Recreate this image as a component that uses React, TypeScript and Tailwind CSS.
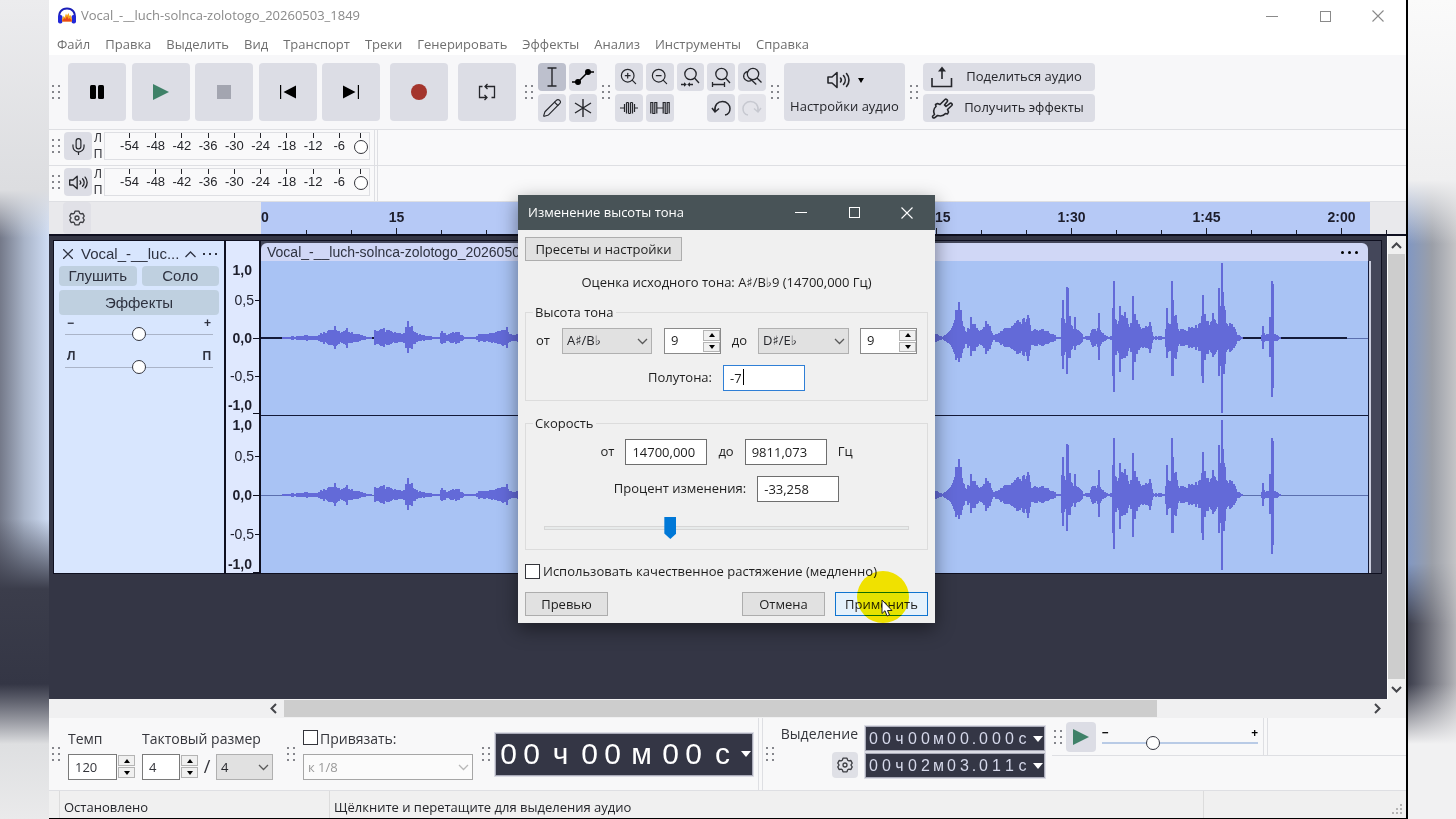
import type { ReactNode } from "react";
import { Mic, Pencil, ZoomIn, ZoomOut } from "lucide-react";
import { clsx } from "clsx";

const MENU = [
  "Файл",
  "Правка",
  "Выделить",
  "Вид",
  "Транспорт",
  "Треки",
  "Генерировать",
  "Эффекты",
  "Анализ",
  "Инструменты",
  "Справка",
];

const METER_MARKS = ["-54", "-48", "-42", "-36", "-30", "-24", "-18", "-12", "-6", "0"];

// 9px per second, one mark every 15 seconds; the marks under the dialog carry no label
const RULER = ["15", "", "", "", "1:15", "1:30", "1:45", "2:00"];

// [x, amplitude] keypoints of the envelope
const ENVELOPE: [number, number][] = [
  [0, 0], [18, 0], [22, 1], [44, 3], [53, 3], [56, 2], [60, 6], [68, 9], [76, 9], [79, 6], [84, 8], [93, 5],
  [103, 2], [112, 0], [113, 8], [123, 10], [133, 6], [139, 5], [143, 8], [146, 17], [150, 13], [154, 5],
  [163, 3], [174, 1], [178, 1], [179, 7], [186, 5], [196, 7], [203, 1], [214, 1], [216, 4], [228, 5],
  [238, 8], [244, 11], [248, 5], [254, 3], [258, 6], [290, 10], [340, 7], [380, 14], [420, 6], [480, 16],
  [540, 9], [600, 14], [655, 8], [673, 5], [681, 1], [685, 5], [690, 12], [694, 24], [697, 28], [701, 14],
  [704, 7], [708, 15], [714, 14], [718, 7], [724, 16], [728, 13], [731, 3], [736, 5], [742, 10], [750, 14],
  [756, 19], [762, 20], [767, 24], [769, 11], [776, 10], [783, 9], [793, 3], [795, 1], [799, 1], [800, 20],
  [804, 18], [808, 27], [811, 11], [818, 8], [821, 2], [828, 2], [830, 11], [837, 10], [842, 4], [846, 1],
  [850, 3], [851, 26], [856, 15], [860, 28], [864, 22], [868, 14], [874, 20], [878, 14], [884, 12],
  [889, 14], [891, 2], [898, 2], [903, 1], [905, 22], [909, 12], [913, 28], [917, 10], [923, 9], [928, 13],
  [936, 14], [942, 20], [948, 18], [952, 22], [956, 14], [958, 32], [963, 32], [965, 16], [970, 17],
  [975, 5], [979, 1], [983, 0], [999, 0], [1001, 7], [1003, 3], [1008, 5], [1014, 5], [1017, 1], [1020, 0],
];

// [x, height above the axis, height below it]
const SPIKES: [number, number, number][] = [
  [73, 12, 11], [85, 10, 10], [146, 17, 15], [245, 11, 10], [694, 28, 22], [695, 28, 20], [697, 36, 24], [699, 28, 20],
  [709, 21, 18], [724, 17, 16], [766, 20, 23], [801, 38, 31], [805, 51, 36], [806, 50, 20], [813, 21, 12],
  [837, 25, 22], [851, 30, 38], [852, 57, 54], [858, 32, 34], [863, 26, 20], [871, 42, 42], [873, 24, 24],
  [888, 16, 15], [905, 30, 20], [910, 57, 38], [911, 38, 38], [940, 22, 38], [941, 43, 45], [943, 24, 22],
  [951, 25, 19], [957, 50, 38], [959, 32, 28], [960, 75, 75], [961, 46, 32], [962, 32, 36], [1001, 12, 11],
  [1008, 21, 19], [1010, 57, 59], [1011, 54, 50],
];

function buildWave(axis: number) {
  let d = "";
  for (let i = 0; i < ENVELOPE.length - 1; i++) {
    const [x0, a0] = ENVELOPE[i];
    const [x1, a1] = ENVELOPE[i + 1];
    for (let x = x0; x < x1; x++) {
      const amp = a0 + ((a1 - a0) * (x - x0)) / (x1 - x0);
      if (amp < 0.3) continue;
      const noise = Math.abs(Math.sin(x * 12.9898) * 43758.5453) % 1;
      const up = amp * (0.6 + 0.4 * noise);
      const down = amp * (0.55 + 0.35 * noise);
      d += `M${x} ${(axis - up).toFixed(1)}V${(axis + down).toFixed(1)}`;
    }
  }
  for (const [x, up, down] of SPIKES) d += `M${x} ${axis - up}V${axis + down}`;
  return d;
}

const WAVE = buildWave(77) + buildWave(234);

function Grip() {
  return (
    <div className="grid w-2 shrink-0 grid-cols-2 gap-1" aria-hidden="true">
      {[0, 1, 2, 3, 4, 5].map((i) => (
        <span key={i} className="size-[2px] bg-[#85868c]" />
      ))}
    </div>
  );
}

function ToolButton({ label, className, children }: { label: string; className?: string; children: ReactNode }) {
  return (
    <button
      type="button"
      aria-label={label}
      className={clsx("flex shrink-0 items-center justify-center rounded-sm text-[#25262b]", className ?? "bg-[#dcdde5]")}
    >
      {children}
    </button>
  );
}

function Gear() {
  return (
    <svg viewBox="0 0 16 16" className="size-4" fill="none" stroke="#3c3d42" strokeWidth="1.3" strokeLinejoin="round">
      <path d="M6 1.2h4l.7 2 1.2.7 2-.4 1.3 2.6L13.9 8l1.3 1.9-1.3 2.6-2-.4-1.2.7-.7 2H6l-.7-2-1.2-.7-2 .4L.8 9.9 2.1 8 .8 6.1 2.1 3.5l2 .4 1.2-.7z" />
      <circle cx="8" cy="8" r="2" />
    </svg>
  );
}

function Speaker({ className }: { className: string }) {
  return (
    <svg viewBox="0 0 24 20" className={className} fill="none" stroke="currentColor" strokeWidth="1.6" strokeLinecap="round" strokeLinejoin="round">
      <path d="M2 7v6h4l5 4.5v-15L6 7z" />
      <path d="M14.5 8c1 1.2 1 2.8 0 4M17.5 5.5c2.3 2.6 2.3 6.4 0 9M20.5 3.5c3.3 3.8 3.3 9.2 0 13" />
    </svg>
  );
}

function Chevron({ className, d = "M1 1l4.5 4.5L10 1" }: { className?: string; d?: string }) {
  return (
    <svg viewBox="0 0 11 7" className={clsx("h-[7px] w-[11px] shrink-0", className)} fill="none" stroke="currentColor" strokeWidth="1.3">
      <path d={d} />
    </svg>
  );
}

function WindowButtons({ className }: { className: string }) {
  return (
    <div className={className}>
      <button type="button" aria-label="Свернуть" className="flex h-4 w-3 items-center">
        <span className="h-px w-3 bg-current" />
      </button>
      <button type="button" aria-label="Развернуть" className="size-[11px] border border-current" />
      <button type="button" aria-label="Закрыть">
        <svg viewBox="0 0 12 12" className="size-3" stroke="currentColor" strokeWidth="1.1">
          <path d="M.5.5l11 11M11.5.5l-11 11" />
        </svg>
      </button>
    </div>
  );
}

function TitleBar() {
  return (
    <header className="flex h-8 items-center gap-1 bg-white pl-2 text-[#8a8a8a]">
      <svg viewBox="0 0 20 18" className="h-[18px] w-5">
        <path d="M2.5 12C1 5 5 1.5 10 1.5S19 5 17.5 12" fill="none" stroke="#1b1fb8" strokeWidth="2" />
        <rect x="1" y="8" width="4.5" height="8.5" rx="2" fill="#2228d8" />
        <rect x="14.5" y="8" width="4.5" height="8.5" rx="2" fill="#2228d8" />
        <path d="M5 12l1.5-3 1 1.5 1.5-4 1 2 1.5-2.5 1 3 1-1 1.5 4v2.5H5z" fill="#f8a51c" />
        <path d="M5.5 13l2-2 1 1 1.5-3 1.5 3 1-1 2 2v1.5h-9z" fill="#e8471c" />
      </svg>
      <h1 className="flex-1 text-[13px]">Vocal_-__luch-solnca-zolotogo_20260503_1849</h1>
      <WindowButtons className="flex w-[140px] items-center justify-between pr-[22px]" />
    </header>
  );
}

function Transport() {
  return (
    <>
      <div className="flex w-[312px] shrink-0 justify-between">
        <ToolButton label="Пауза" className="size-[58px] bg-[#dcdde5]">
          <svg viewBox="0 0 14 14" className="size-[14px]">
            <rect width="6" height="14" rx="1.5" />
            <rect x="8" width="6" height="14" rx="1.5" />
          </svg>
        </ToolButton>
        <ToolButton label="Воспроизвести" className="size-[58px] bg-[#dcdde5]">
          <svg viewBox="0 0 16 16" className="size-4" fill="#3f8168">
            <path d="M0 0l16 8-16 8z" />
          </svg>
        </ToolButton>
        <ToolButton label="Стоп" className="size-[58px] bg-[#dcdde5]">
          <span className="size-[14px] bg-[#a3a5b0]" />
        </ToolButton>
        <ToolButton label="К началу" className="size-[58px] bg-[#dcdde5]">
          <svg viewBox="0 0 16 14" className="h-[14px] w-4" fill="#000">
            <path d="M0 0h1.2v14H0zM16 .5v13L3.5 7z" />
          </svg>
        </ToolButton>
        <ToolButton label="К концу" className="size-[58px] bg-[#dcdde5]">
          <svg viewBox="0 0 16 14" className="h-[14px] w-4" fill="#000">
            <path d="M14.8 0H16v14h-1.2zM0 .5v13L12.5 7z" />
          </svg>
        </ToolButton>
      </div>
      <ToolButton label="Запись" className="ml-[10px] size-[58px] bg-[#dcdde5]">
        <span className="size-4 rounded-full bg-[#a4352d]" />
      </ToolButton>
      <ToolButton label="Петля" className="ml-[10px] size-[58px] bg-[#dcdde5]">
        <svg viewBox="0 0 18 18" className="size-[18px]" fill="none" stroke="currentColor" strokeWidth="1.3">
          <path d="M4.5 3.5h-3v11h7M13.5 14.5h3v-11h-9M9.5 1L7 3.5 9.5 6M6.500 12L9 14.5 6.500 17" />
        </svg>
      </ToolButton>
    </>
  );
}

function Toolbars() {
  return (
    <div className="flex h-[75px] items-center border-b border-[#dedfe3] bg-[#f7f7f9] pl-[3px]">
      <Grip />
      <div className="w-2 shrink-0" />
      <Transport />
      <div className="flex w-[22px] shrink-0 justify-center pl-1">
        <Grip />
      </div>
      <div className="grid shrink-0 grid-cols-2 gap-[3px]">
        <ToolButton label="Выделение" className="size-7 bg-[#bdc0cd]">
          <svg viewBox="0 0 12 20" className="h-5 w-3" fill="none" stroke="currentColor" strokeWidth="1.4">
            <path d="M1.5 1h9M1.5 19h9M6 1v18" />
          </svg>
        </ToolButton>
        <ToolButton label="Огибающая" className="size-7 bg-[#dcdde5]">
          <svg viewBox="0 0 24 20" className="h-5 w-6" stroke="#000" strokeWidth="1.4">
            <path d="M1 15h6L17 5h6" fill="none" />
            <circle cx="7" cy="15" r="2.3" />
            <circle cx="17" cy="5" r="2.3" />
          </svg>
        </ToolButton>
        <ToolButton label="Карандаш" className="size-7 bg-[#dcdde5]">
          <Pencil size={20} strokeWidth={1.4} />
        </ToolButton>
        <ToolButton label="Мульти-инструмент" className="size-7 bg-[#dcdde5]">
          <svg viewBox="0 0 18 18" className="size-[18px]" stroke="currentColor" strokeWidth="1.4">
            <path d="M9 0v18M1 4l16 10M17 4L1 14" />
          </svg>
        </ToolButton>
      </div>
      <div className="flex w-[18px] shrink-0 justify-center">
        <Grip />
      </div>
      <div className="grid w-[151px] shrink-0 grid-cols-5 gap-[3px]">
        <ToolButton label="Приблизить" className="h-7 bg-[#dcdde5]">
          <ZoomIn size={19} strokeWidth={1.5} />
        </ToolButton>
        <ToolButton label="Отдалить" className="h-7 bg-[#dcdde5]">
          <ZoomOut size={19} strokeWidth={1.5} />
        </ToolButton>
        <ToolButton label="Вместить выделенное" className="h-7 bg-[#dcdde5]">
          <svg viewBox="0 0 20 20" className="size-5" fill="none" stroke="currentColor" strokeWidth="1.3">
            <circle cx="10.5" cy="7" r="5.7" />
            <path d="M14.5 11l4.5 5M1 17.5h4M9 17.5h4" />
            <path d="M4 15.2v4.600l2.800-2.300zM10 15.2v4.600l-2.800-2.300z" fill="currentColor" stroke="none" />
          </svg>
        </ToolButton>
        <ToolButton label="Вместить проект" className="h-7 bg-[#dcdde5]">
          <svg viewBox="0 0 20 20" className="size-5" fill="none" stroke="currentColor" strokeWidth="1.3">
            <circle cx="10.5" cy="7" r="5.7" />
            <path d="M14.5 11l4.5 5M1.5 17.5h12M1.5 15v5M13.5 15v5" />
          </svg>
        </ToolButton>
        <ToolButton label="Переключить масштаб" className="h-7 bg-[#dcdde5]">
          <svg viewBox="0 0 20 20" className="size-5" fill="none" stroke="currentColor" strokeWidth="1.3">
            <circle cx="11" cy="7" r="5.7" />
            <path d="M15 11l4.5 4.5M5.500 4.5C2.500 5 1 8 2 11c1.300 3 5 4 7.800 2.200M9.800 13.200l4.500 4.300" />
          </svg>
        </ToolButton>
        <ToolButton label="Обрезать" className="h-7 bg-[#dcdde5]">
          <svg viewBox="0 0 18 14" className="h-[14px] w-[18px]" fill="none" stroke="currentColor" strokeWidth="1.2">
            <path d="M0 7h4.500M4.500 3v8M6.500 12.500v-11M8.500 1.500v11M10.500 12.500v-11M12.500 1.500v11M14.500 3v8M14.500 7H18M6.500 1.500h2M8.500 12.500h2M10.500 1.500h2" />
          </svg>
        </ToolButton>
        <ToolButton label="Тишина" className="h-7 bg-[#dcdde5]">
          <svg viewBox="0 0 20 14" className="h-[14px] w-5" fill="none" stroke="currentColor" strokeWidth="1.2">
            <path d="M.8 12.500v-11h2v11h2v-11h2v11M6.800 7h6.400M13.200 12.500v-11h2v11h2v-11h2v11" />
          </svg>
        </ToolButton>
        <span />
        <ToolButton label="Отменить" className="h-7 bg-[#dcdde5]">
          <svg viewBox="0 0 20 18" className="h-[18px] w-5" fill="none" stroke="currentColor" strokeWidth="1.5">
            <path d="M4 12.5C3 6 7 2.5 11.5 2.5S19 6 19 9.5s-2 6-5 6.5M1 9l3 4 4-3.5" />
          </svg>
        </ToolButton>
        <ToolButton label="Повторить" className="h-7 bg-[#dcdde5] opacity-70">
          <svg viewBox="0 0 20 18" className="h-[18px] w-5" fill="none" stroke="#b3b5bf" strokeWidth="1.5">
            <path d="M16 12.5C17 6 13 2.5 8.5 2.5S1 6 1 9.5s2 6 5 6.5M19 9l-3 4-4-3.5" />
          </svg>
        </ToolButton>
      </div>
      <div className="flex w-[18px] shrink-0 justify-center">
        <Grip />
      </div>
      <button type="button" className="flex h-[58px] w-[121px] shrink-0 flex-col items-center justify-center gap-1 rounded-sm bg-[#dcdde5] pt-1 text-[13px] leading-6 text-[#25262b]">
        <span className="flex items-center gap-1">
          <Speaker className="h-5 w-6" />
          <span className="ml-1 border-x-[3px] border-t-[5px] border-x-transparent border-t-black" />
        </span>
        Настройки аудио
      </button>
      <div className="flex w-[18px] shrink-0 justify-center">
        <Grip />
      </div>
      <div className="flex w-[172px] shrink-0 flex-col gap-[3px] text-[13px] text-[#25262b]">
        <button type="button" className="flex h-7 items-center rounded-sm bg-[#dcdde5] pl-2">
          <svg viewBox="0 0 22 22" className="size-[22px]" fill="none" stroke="currentColor" strokeWidth="1.6">
            <path d="M1 12v8.5h19.5V12M11 13V2" />
            <path d="M7 5.500L11 .500l4 5z" fill="currentColor" stroke="none" />
          </svg>
          <span className="flex-1 text-center">Поделиться аудио</span>
        </button>
        <button type="button" className="flex h-7 items-center rounded-sm bg-[#dcdde5] pl-2">
          <svg viewBox="0 0 22 22" className="size-[22px]" fill="none" stroke="currentColor" strokeWidth="1.6" strokeLinejoin="round">
            <path d="M3.500 17.500C2 14 2.500 11.500 5 9.500L4.500 7.500 6.500 6.500 9 7.500 14 2.500c1-1 3.200.500 2.300 2L13.500 8l1.500 1.500 4-3.200c1.500-.8 2.800 1 1.800 2.200L16.500 12.500l1 2.500-1 2-2-.5c-2 2.500-4.500 3-8 2l-3 2.300c-1.200.6-2.300-.6-1.800-1.800z" />
          </svg>
          <span className="flex-1 text-center">Получить эффекты</span>
        </button>
      </div>
    </div>
  );
}

function Meter({ label, icon }: { label: string; icon: ReactNode }) {
  return (
    <div className="flex h-9 border-b border-[#dedfe3] bg-[#f9f9fa] pl-[3px]">
      <div className="flex w-[323px] items-center border-r border-[#dedfe3] pb-[3px]">
        <Grip />
        <div className="w-1 shrink-0" />
        <ToolButton label={label} className="size-7 bg-[#dcdde5]">
          {icon}
        </ToolButton>
        <div className="flex w-3 shrink-0 flex-col items-center font-['Liberation_Sans',sans-serif] text-xs leading-4 text-[#34353b]">
          <span>Л</span>
          <span>П</span>
        </div>
        <div className="flex h-7 w-[266px] justify-between border border-[#dedfe3] pl-3 font-['Liberation_Sans',sans-serif] text-[13px] leading-4 text-[#25262b]">
          {METER_MARKS.map((mark) => (
            <div key={mark} className={clsx("flex flex-col items-center", mark === "0" ? "w-4" : "w-[25px]")}>
              <span className="h-[5px] w-px bg-[#25262b]" />
              {mark === "0" ? <span className="mt-[2px] size-[14px] rounded-full border-[1.5px] border-[#34353b] bg-white" /> : <span>{mark}</span>}
            </div>
          ))}
        </div>
      </div>
      <div className="ml-[2px] border-l border-[#dedfe3]" />
    </div>
  );
}

function TimeRuler() {
  return (
    <div className="flex h-8 bg-[#e9e9ec]">
      <div className="flex w-[212px] shrink-0 items-center pl-[14px]">
        <ToolButton label="Параметры линейки" className="h-full w-7 bg-[#e1e1e7]">
          <Gear />
        </ToolButton>
      </div>
      <div className="flex w-[1109px] shrink-0 bg-[#b6c9f6] font-['Liberation_Sans',sans-serif] text-sm font-bold text-[#1d1e2c]">
        <span className="flex w-[68px] shrink-0 pt-[7px] leading-4">
          <span className="w-[45px]">0</span>
          <span className="h-1 w-px self-end bg-[#1d1e2c]" />
        </span>
        {RULER.map((mark, i) => (
          <div key={i} className="flex w-[135px] shrink-0 flex-col items-center justify-between pt-[7px]">
            <span className="h-4 leading-4">{mark}</span>
            <span className="flex w-[91px] items-end justify-between">
              <span className="h-1 w-px bg-[#1d1e2c]" />
              <span className="h-1.5 w-px bg-[#1d1e2c]" />
              <span className="h-1 w-px bg-[#1d1e2c]" />
            </span>
          </div>
        ))}
      </div>
    </div>
  );
}

function TrackSlider({ label, low, high }: { label: string; low: string; high: string }) {
  return (
    <label className="flex flex-col px-[6px]">
      <span className="flex justify-between px-[2px] text-xs leading-3 font-bold">
        <span>{low}</span>
        <span>{high}</span>
      </span>
      <input
        type="range"
        aria-label={label}
        defaultValue={50}
        className="h-[10px] w-full appearance-none bg-transparent [&::-webkit-slider-runnable-track]:h-px [&::-webkit-slider-runnable-track]:bg-[#aab4c8] [&::-webkit-slider-thumb]:-mt-[7px] [&::-webkit-slider-thumb]:size-[14px] [&::-webkit-slider-thumb]:appearance-none [&::-webkit-slider-thumb]:rounded-full [&::-webkit-slider-thumb]:border-[1.5px] [&::-webkit-slider-thumb]:border-solid [&::-webkit-slider-thumb]:border-[#33353f] [&::-webkit-slider-thumb]:bg-white"
      />
    </label>
  );
}

function TrackPanel() {
  return (
    <div className="w-[170px] shrink-0 bg-[#d8e6fe] px-[5px] pt-[3px] font-['Liberation_Sans',sans-serif] text-[15px] text-[#2e3240]">
      <div className="flex h-5 items-center">
        <button type="button" aria-label="Закрыть трек" className="pl-1">
          <svg viewBox="0 0 10 10" className="size-[10px]" stroke="currentColor" strokeWidth="1.3">
            <path d="M0 0l10 10M10 0L0 10" />
          </svg>
        </button>
        <span className="ml-2 flex-1">Vocal_-__luc...</span>
        <Chevron d="M.5 6L5.5 1l5 5" />
        <button type="button" aria-label="Меню трека" className="flex gap-1 pr-[2px] pl-[7px]">
          <span className="size-[2px] bg-current" />
          <span className="size-[2px] bg-current" />
          <span className="size-[2px] bg-current" />
        </button>
      </div>
      <div className="mt-[2px] grid grid-cols-2 gap-[5px]">
        <button type="button" className="h-5 rounded-sm bg-[#bfd0e0] leading-5">Глушить</button>
        <button type="button" className="h-5 rounded-sm bg-[#bfd0e0] leading-5">Соло</button>
      </div>
      <button type="button" className="mt-1 h-[25px] w-full rounded-sm bg-[#bfd0e0] leading-6">Эффекты</button>
      <div className="mt-[2px] flex flex-col gap-[11px]">
        <TrackSlider label="Громкость" low="−" high="+" />
        <TrackSlider label="Панорама" low="Л" high="П" />
      </div>
    </div>
  );
}

function ScaleMark({ text, className, tick }: { text: string; className: string; tick?: string }) {
  return (
    <div className={clsx("flex items-center justify-end gap-px", className)}>
      {text}
      <span className={clsx("h-px bg-[#0f1020]", tick ?? "w-[6px] opacity-0")} />
    </div>
  );
}

function ChannelScale({ half }: { half: string }) {
  return (
    <div>
      <ScaleMark text="1,0" className="h-[18px] font-bold" />
      <ScaleMark text="0,5" className={half} tick="w-1" />
      <ScaleMark text="0,0" className="h-[34px] font-bold" tick="w-[6px]" />
      <ScaleMark text="-0,5" className={half} tick="w-1" />
      <ScaleMark text="-1,0" className="h-4 font-bold" />
      <div className="ml-auto h-px w-[6px] bg-[#0f1020]" />
    </div>
  );
}

function Track() {
  return (
    <div className="mt-1 mr-[5px] flex border border-[#0f1020] bg-[#44475a]">
      <TrackPanel />
      <div className="flex h-[332px] w-[37px] shrink-0 flex-col gap-[2px] border-r-2 border-l-2 border-[#0f1020] bg-[#dfe8fe] pt-5 font-['Liberation_Sans',sans-serif] text-sm text-[#1d1e2c]">
        <ChannelScale half="h-[42px]" />
        <ChannelScale half="h-11" />
      </div>
      <div className="min-w-0 flex-1 pt-[2px]">
        <div className="mr-[13px] flex h-[18px] items-center justify-between rounded-t-md bg-[#d0d7f6] pr-[10px] pl-[6px] font-['Liberation_Sans',sans-serif] text-sm text-[#2e3240]">
          <span className="w-[251px] overflow-hidden whitespace-nowrap">Vocal_-__luch-solnca-zolotogo_2026050</span>
          <button type="button" aria-label="Меню клипа" className="flex gap-1">
            <span className="size-[3px] rounded-full bg-black" />
            <span className="size-[3px] rounded-full bg-black" />
            <span className="size-[3px] rounded-full bg-black" />
          </button>
        </div>
        <div className="mr-[10px] border-r-2 border-[#c9ccdc] bg-[#a9c3f4]">
          <svg viewBox="-1 0 1108 312" preserveAspectRatio="none" className="block h-[312px] w-full" shapeRendering="crispEdges">
            <path d="M-1 77h1086" stroke="#141a38" strokeWidth="2" />
            <path d="M1085 77.5h22M-1 234.5h1108" stroke="#5b6fae" />
            <path d="M-1 154.5h1108M1106.500 0v312" stroke="#141a38" />
            <path d={WAVE} stroke="#636ad8" strokeWidth="1.2" />
          </svg>
        </div>
      </div>
    </div>
  );
}

function ScrollV() {
  return (
    <div className="flex w-[19px] shrink-0 flex-col items-center border-l border-[#fff] bg-[#f0f0f0] pr-px text-[#44454a]">
      <button type="button" aria-label="Вверх" className="flex h-[18px] items-center">
        <Chevron className="w-2 stroke-2" d="M1 6l4.5-4.5L10 6" />
      </button>
      <div className="w-full flex-1 bg-[#cdcdcd]" />
      <button type="button" aria-label="Вниз" className="flex h-5 items-center">
        <Chevron className="w-2 stroke-2" />
      </button>
    </div>
  );
}

function ScrollH() {
  return (
    <div className="flex h-[19px] items-center bg-[#f0f0f1] pr-[23px] pl-[219px] text-[#44454a]">
      <button type="button" aria-label="Влево" className="w-4">
        <Chevron className="rotate-90 stroke-2" />
      </button>
      <div className="h-[17px] w-[873px] bg-[#cdcdcd]" />
      <div className="flex-1" />
      <button type="button" aria-label="Вправо">
        <Chevron className="-rotate-90 stroke-2" />
      </button>
    </div>
  );
}

function SpinButtons({ label }: { label: string }) {
  return (
    <span className="flex w-[17px] shrink-0 flex-col gap-px py-px">
      <button type="button" aria-label={`${label}: больше`} className="flex h-[11px] items-center justify-center border border-[#b4b4b4] bg-[#f0f0f0]">
        <span className="border-x-[3px] border-b-4 border-x-transparent border-b-black" />
      </button>
      <button type="button" aria-label={`${label}: меньше`} className="flex h-[11px] items-center justify-center border border-[#b4b4b4] bg-[#f0f0f0]">
        <span className="border-x-[3px] border-t-4 border-x-transparent border-t-black" />
      </button>
    </span>
  );
}

function Select({ label, value, className, disabled }: { label: string; value: string; className: string; disabled?: boolean }) {
  return (
    <span className={clsx("grid shrink-0 items-center", className)}>
      <select
        aria-label={label}
        disabled={disabled}
        className={clsx(
          "col-start-1 row-start-1 h-[26px] w-full appearance-none border pl-1 text-[13px] opacity-100",
          disabled ? "border-[#a6a6a6] bg-[#fbfbfb] text-[#9a9a9a]" : "border-[#b0b0b0] bg-[#e1e1e1] text-[#25262b]",
        )}
      >
        <option>{value}</option>
      </select>
      <Chevron className={clsx("pointer-events-none col-start-1 row-start-1 mr-1 justify-self-end", disabled ? "text-[#b8b8b8]" : "text-[#5a5a5a]")} />
    </span>
  );
}

function TimeDisplay({ text, big }: { text: string; big?: boolean }) {
  return (
    <div className={clsx("flex shrink-0 items-center border border-[#a9aab8] bg-[#343645] font-['Liberation_Sans',sans-serif] outline outline-[#dcdde5]", big ? "h-[43px] w-[258px] pl-px text-[30px] text-white" : "h-[25px] w-[180px] pl-px text-base text-[#d5d8ea]")}>
      {text.split("").map((ch, i) => {
        const digit = ch >= "0" && ch <= "9";
        return (
          <span key={i} className={clsx("shrink-0 text-center", big ? (digit ? "w-[23px]" : "w-[35px]") : ch === "." ? "w-[6px]" : "w-[13px]")}>
            {ch}
          </span>
        );
      })}
      <button type="button" aria-label="Формат времени" className="mr-px ml-auto border-x-[5px] border-t-[6px] border-x-transparent border-t-white" />
    </div>
  );
}

function BottomBars() {
  return (
    <div className="flex h-[73px] border-b border-[#dedfe3] bg-[#f8f8f9] pl-[3px] text-sm text-[#34353b]">
      <div className="flex items-center">
        <Grip />
      </div>
      <div className="ml-2 flex w-[74px] shrink-0 flex-col pt-[11px]">
        <label htmlFor="tempo" className="h-[25px] leading-5">Темп</label>
        <div className="flex gap-px">
          <input id="tempo" defaultValue="120" className="h-[26px] w-[49px] border border-[#7a7a7a] bg-white pl-[6px] text-[13px]" />
          <SpinButtons label="Темп" />
        </div>
      </div>
      <div className="flex w-[131px] shrink-0 flex-col pt-[11px]">
        <label htmlFor="beats" className="h-[25px] leading-5 whitespace-nowrap">Тактовый размер</label>
        <div className="flex gap-px">
          <input id="beats" defaultValue="4" className="h-[26px] w-[38px] border border-[#7a7a7a] bg-white pl-[6px] text-[13px]" />
          <SpinButtons label="Тактовый размер" />
          <span className="flex-1 text-center text-lg leading-6">/</span>
          <Select label="Длительность" value="4" className="w-[57px]" />
        </div>
      </div>
      <div className="ml-[14px] flex items-center">
        <Grip />
      </div>
      <div className="ml-[8px] flex w-[170px] shrink-0 flex-col pt-[11px]">
        <label className="flex h-[25px] items-start gap-[2px] leading-5">
          <input type="checkbox" className="mt-px size-[15px] appearance-none border border-[#34353b] bg-white" />
          Привязать:
        </label>
        <Select label="Привязать" value="к 1/8" className="w-full" disabled />
      </div>
      <div className="ml-[9px] flex items-center">
        <Grip />
      </div>
      <div className="ml-[5px] flex shrink-0 items-center border-r border-[#dedfe3] pr-[5px]">
        <TimeDisplay text="00ч00м00с" big />
      </div>
      <div className="ml-[3px] flex items-center border-l border-[#dedfe3] pl-[3px]">
        <Grip />
      </div>
      <div className="ml-[9px] flex w-[75px] shrink-0 flex-col items-end pt-[6px]">
        <span className="h-7 leading-5">Выделение</span>
        <ToolButton label="Параметры выделения" className="size-[26px] bg-[#dfe0e6]">
          <Gear />
        </ToolButton>
      </div>
      <div className="ml-[7px] flex shrink-0 flex-col gap-[2px] pt-2">
        <TimeDisplay text="00ч00м00.000с" />
        <TimeDisplay text="00ч02м03.011с" />
      </div>
      <div className="ml-[7px] flex-1">
        <div className="flex h-[38px] border-b border-[#dedfe3]">
          <div className="flex w-[212px] shrink-0 items-center gap-1 border-r border-[#dedfe3] pl-[2px]">
            <Grip />
            <ToolButton label="Воспроизвести на скорости" className="size-[30px] bg-[#dcdde5]">
              <svg viewBox="0 0 16 16" className="size-4" fill="#3f8168">
                <path d="M0 0l16 8-16 8z" />
              </svg>
            </ToolButton>
            <label className="ml-[2px] flex w-[156px] flex-col">
              <span className="flex justify-between text-xs leading-3 font-bold text-black">
                <span>−</span>
                <span>+</span>
              </span>
              <input
                type="range"
                aria-label="Скорость воспроизведения"
                defaultValue={31}
                className="h-2 w-full appearance-none bg-transparent [&::-webkit-slider-runnable-track]:h-[2px] [&::-webkit-slider-runnable-track]:bg-[#b9cbe6] [&::-webkit-slider-thumb]:-mt-[6px] [&::-webkit-slider-thumb]:size-[14px] [&::-webkit-slider-thumb]:appearance-none [&::-webkit-slider-thumb]:rounded-full [&::-webkit-slider-thumb]:border-[1.5px] [&::-webkit-slider-thumb]:border-solid [&::-webkit-slider-thumb]:border-[#33353f] [&::-webkit-slider-thumb]:bg-white"
              />
            </label>
          </div>
          <div className="ml-[3px] border-l border-[#dedfe3]" />
        </div>
      </div>
    </div>
  );
}

function NumberField({ id, value, className }: { id: string; value: string; className?: string }) {
  return <input id={id} defaultValue={value} className={clsx("h-[26px] w-[82px] border bg-white pl-[6px] text-[13px]", className ?? "border-[#6e6e6e]")} />;
}

function OctaveField({ label, value }: { label: string; value: string }) {
  return (
    <span className="flex h-[26px] w-[57px] shrink-0 border border-[#8a8a8a] bg-white">
      <input aria-label={label} defaultValue={value} className="w-[38px] bg-transparent pl-[6px] text-[13px]" />
      <SpinButtons label={label} />
    </span>
  );
}

function PitchDialog() {
  return (
    <section role="dialog" aria-label="Изменение высоты тона" className="absolute top-[195px] left-[469px] w-[417px] bg-[#f0f0f0] pb-[7px] text-[13px] text-[#1e1e1e] shadow-[0_6px_18px_rgba(0,0,0,0.45)]">
      <div className="flex h-[35px] items-center justify-between bg-[#485357] pl-[10px] text-white">
        <h2>Изменение высоты тона</h2>
        <WindowButtons className="flex w-[140px] items-center justify-between pr-[22px]" />
      </div>
      <div className="px-[7px] pt-[7px]">
        <button type="button" className="h-6 w-[157px] border border-[#adadad] bg-[#e1e1e1] leading-5">Пресеты и настройки</button>
        <p className="mt-[11px] text-center leading-5">Оценка исходного тона: A♯/B♭9 (14700,000 Гц)</p>
        <fieldset className="mt-[10px] h-[99px] border border-[#dcdcdc] px-[10px]">
          <legend className="-ml-[3px] px-[2px] leading-5">Высота тона</legend>
          <div className="mt-[6px] flex items-center">
            <span className="w-[26px]">от</span>
            <Select label="Исходная нота" value="A♯/B♭" className="w-[90px]" />
            <span className="w-3" />
            <OctaveField label="Исходная октава" value="9" />
            <span className="flex-1 text-center">до</span>
            <Select label="Целевая нота" value="D♯/E♭" className="w-[91px]" />
            <span className="w-[11px]" />
            <OctaveField label="Целевая октава" value="9" />
          </div>
          <div className="mt-[11px] flex items-center justify-center gap-[11px]">
            <label htmlFor="semitones">Полутона:</label>
            <span className="relative">
              <NumberField id="semitones" value="-7" className="border-[#2f7fd6]" />
              <span className="absolute top-1 left-5 h-4 w-px bg-black" />
            </span>
          </div>
        </fieldset>
        <fieldset className="mt-3 h-[137px] border border-[#dcdcdc] px-[10px]">
          <legend className="-ml-[3px] px-[2px] leading-5">Скорость</legend>
          <div className="mt-[6px] flex items-center justify-center gap-[11px]">
            <label htmlFor="hz-from">от</label>
            <NumberField id="hz-from" value="14700,000" />
            <label htmlFor="hz-to">до</label>
            <NumberField id="hz-to" value="9811,073" />
            <span>Гц</span>
          </div>
          <div className="mt-[11px] flex items-center justify-center gap-[11px]">
            <label htmlFor="percent">Процент изменения:</label>
            <NumberField id="percent" value="-33,258" />
          </div>
          <input
            type="range"
            aria-label="Процент изменения"
            defaultValue={34}
            className="mx-2 mt-[14px] block h-6 w-[365px] appearance-none bg-transparent [&::-webkit-slider-runnable-track]:h-1 [&::-webkit-slider-runnable-track]:border [&::-webkit-slider-runnable-track]:border-[#d6d6d6] [&::-webkit-slider-runnable-track]:bg-[#e7eaea] [&::-webkit-slider-thumb]:-mt-[10px] [&::-webkit-slider-thumb]:h-[22px] [&::-webkit-slider-thumb]:w-3 [&::-webkit-slider-thumb]:appearance-none [&::-webkit-slider-thumb]:bg-[#0078d7] [&::-webkit-slider-thumb]:[clip-path:polygon(0_0,100%_0,100%_75%,50%_100%,0_75%)]"
          />
        </fieldset>
        <label className="mt-[11px] flex items-center gap-[3px] leading-5 whitespace-nowrap">
          <input type="checkbox" className="size-[15px] appearance-none border border-[#34353b] bg-white" />
          Использовать качественное растяжение (медленно)
        </label>
        <div className="mt-[11px] flex gap-[10px]">
          <button type="button" className="h-6 w-[83px] border border-[#adadad] bg-[#e1e1e1] leading-5">Превью</button>
          <button type="button" className="ml-auto h-6 w-[83px] border border-[#adadad] bg-[#e1e1e1] leading-5">Отмена</button>
          <button type="button" className="h-6 w-[93px] border border-[#0f74d0] bg-[#e5f1fb] leading-5">Применить</button>
        </div>
      </div>
      {/* pointer with its highlight */}
      <div className="pointer-events-none absolute right-[26px] bottom-0 size-[52px] rounded-full bg-[#fff000] mix-blend-multiply" />
      <svg viewBox="0 0 12 18" className="pointer-events-none absolute right-[42px] bottom-[6px] h-[18px] w-3" fill="#fff" stroke="#222">
        <path d="M1 1v13.5l3-2.8L6 17l2.500-1-2-4.500H11z" />
      </svg>
    </section>
  );
}

function StatusBar() {
  return (
    <footer className="flex h-7 border-b border-black bg-[#f0f0f0] text-[13px] leading-8 text-[#25262b]">
      <div className="w-[11px] shrink-0 border-r border-[#dcdcdc]" />
      <div className="w-[270px] shrink-0 overflow-hidden border-r border-[#dcdcdc] pl-1">Остановлено</div>
      <div className="w-[874px] overflow-hidden border-r border-[#dcdcdc] pl-1">Щёлкните и перетащите для выделения аудио</div>
      <div className="flex flex-1 items-end justify-end p-1">
        <svg viewBox="0 0 10 10" className="size-[10px]" fill="#b5b5b5">
          <path d="M8 0h2v2H8zM4 4h2v2H4zM8 4h2v2H8zM0 8h2v2H0zM4 8h2v2H4zM8 8h2v2H8z" />
        </svg>
      </div>
    </footer>
  );
}

export default function App() {
  return (
    <div className="flex min-h-screen bg-[#e9e9ec] font-['Open_Sans','Noto_Sans','DejaVu_Sans',sans-serif]">
      <div className="flex w-[49px] shrink-0 flex-col" aria-hidden="true">
        <div className="h-[190px] bg-linear-to-b from-[#ececee] to-[#dcdde0]" />
        <div className="relative flex-1 bg-linear-to-r from-[#747989] via-[#a9b4c8] to-[#cfddf5]">
          <div className="absolute inset-x-0 top-0 h-12 bg-linear-to-b from-[#dcdde0] to-transparent" />
          <div className="absolute inset-x-0 bottom-0 h-[70px] bg-linear-to-b from-transparent to-[#3b3d4b]" />
        </div>
        <div className="h-[95px] bg-linear-to-b from-[#3b3d4b] to-[#343645]" />
        <div className="h-[60px] bg-linear-to-b from-[#343645] to-[#dedfe1]" />
        <div className="h-[75px] bg-linear-to-b from-[#dedfe1] to-[#eaeaeb]" />
      </div>

      <div className="relative flex min-w-0 flex-1 flex-col overflow-hidden border-r-2 border-black bg-white">
        <TitleBar />
        <nav className="flex h-[23px] items-center gap-[15px] bg-white pt-[2px] pl-2 text-[13px] text-[#6f6f6f]">
          {MENU.map((item) => (
            <button key={item} type="button">
              {item}
            </button>
          ))}
        </nav>
        <Toolbars />
        <Meter label="Уровень записи" icon={<Mic size={19} strokeWidth={1.5} />} />
        <Meter label="Уровень воспроизведения" icon={<Speaker className="h-[17px] w-5" />} />
        <TimeRuler />
        <div className="flex flex-1 border-t-2 border-[#0f1020] bg-[#343645]">
          <div className="min-w-0 flex-1 pl-1">
            <Track />
          </div>
          <ScrollV />
        </div>
        <ScrollH />
        <BottomBars />
        <StatusBar />
        <PitchDialog />
      </div>

      <div className="flex w-12 shrink-0 flex-col" aria-hidden="true">
        <div className="h-[180px] bg-linear-to-b from-[#fafafa] to-[#efeff0]" />
        <div className="relative flex-1 bg-linear-to-r from-[#8197c2] via-[#9b9fa8] to-[#c4c4c6]">
          <div className="absolute inset-x-0 top-0 h-16 bg-linear-to-b from-[#efeff0] to-transparent" />
          <div className="absolute inset-x-0 bottom-0 h-[180px] bg-linear-to-r from-[#3c3e4c] to-[#b4b4b8] [mask-image:linear-gradient(to_bottom,transparent,black_60px)]" />
          <div className="absolute inset-x-0 bottom-0 h-[60px] bg-linear-to-b from-transparent to-[#f1f1f2]" />
        </div>
        <div className="h-[75px] bg-[#f1f1f2]" />
      </div>
    </div>
  );
}
